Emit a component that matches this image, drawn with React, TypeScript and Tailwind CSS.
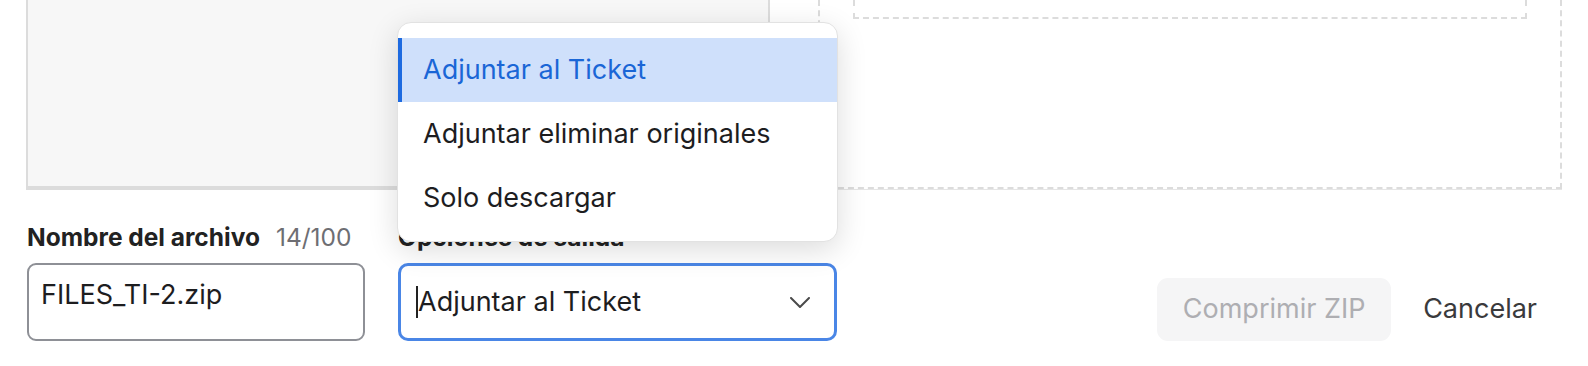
import React from 'react'

const options = ['Adjuntar al Ticket', 'Adjuntar eliminar originales', 'Solo descargar']

const OutputMenu: React.FC<{ selected: number }> = ({ selected }) => {
  return (
    <div className="absolute left-[397px] top-[22px] w-[441px] h-[220px] rounded-[14px] border border-[#e2e2e2] bg-white pt-[15px] shadow-[0_8px_30px_rgba(0,0,0,0.14)]">
      {options.map((opt, i) => (
        <div
          key={opt}
          className={
            i === selected
              ? 'flex h-16 items-center border-l-4 border-[#1d6ae0] bg-[#cfe0fb] pl-[21px] text-[27px] text-[#1a66d6]'
              : 'flex h-16 items-center pl-[25px] text-[27px] text-[#1d1d1f]'
          }
        >
          {opt}
        </div>
      ))}
    </div>
  )
}

export default function App() {
  return (
    <div className="relative h-[366px] w-[1588px] overflow-hidden bg-white font-['Inter',sans-serif] text-[#1d1d1f]">
      {/* preview panels */}
      <div className="flex gap-[48px] pl-[26px]">
        <div className="h-[190px] w-[744px] border-x-2 border-b-4 border-[#dcdcdc] bg-[#f7f7f7]" />
        <div className="h-[189px] w-[744px] border-x-2 border-b-2 border-dashed border-[#dcdcdc] px-[33px] shadow-[0_1px_0_#e6e6e6]">
          <div className="h-[19px] border-x-2 border-b-2 border-dashed border-[#dcdcdc]" />
        </div>
      </div>

      {/* form row */}
      <div className="mt-[33px] flex items-end pl-[27px] pr-[27px]">
        <div className="w-[338px]">
          <div className="flex h-[28px] items-center gap-[16px] text-[24.5px] leading-[28px]">
            <span className="font-bold text-[#222]">Nombre del archivo</span>
            <span className="text-[#6e6e73]">14/100</span>
          </div>
          <input
            readOnly
            value="FILES_TI-2.zip"
            className="mt-3 h-[78px] w-[338px] rounded-[9px] border-2 border-[#8e9096] bg-white pb-[16px] pl-[12px] text-[27px] text-[#1d1d1f] outline-none"
          />
        </div>

        <div className="ml-[33px] w-[439px]">
          <div className="h-[28px] text-[24.5px] font-bold leading-[28px] text-[#222]">Opciones de salida</div>
          <div className="mt-3 flex h-[78px] items-center rounded-[10px] border-[3px] border-[#4a86e6] bg-white pl-[15px] pr-[24px]">
            <span className="h-[32px] w-[2px] bg-[#222]" />
            <span className="flex-1 text-[27px] text-[#1d1d1f]">Adjuntar al Ticket</span>
            <svg width="20" height="11" viewBox="0 0 20 11" fill="none">
              <polyline points="1,1 10,10 19,1" stroke="#4a4a4a" strokeWidth="2" strokeLinecap="round" strokeLinejoin="round" />
            </svg>
          </div>
        </div>

        <div className="ml-auto flex items-center gap-2">
          <button
            disabled
            className="h-[63px] w-[234px] rounded-[11px] bg-[#f5f5f6] text-[27px] text-[#aeaeb2]"
          >
            Comprimir ZIP
          </button>
          <button className="h-[63px] px-6 text-[27px] text-[#3a3a3c]">Cancelar</button>
        </div>
      </div>

      <OutputMenu selected={0} />
    </div>
  )
}
